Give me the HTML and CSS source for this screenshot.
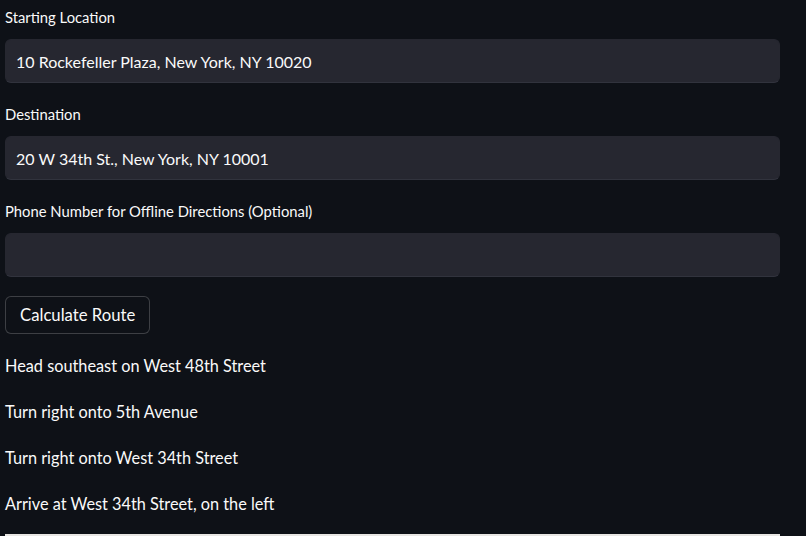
FILE: index.html
```html
<!DOCTYPE html>
<html lang="en">
<head>
    <meta charset="UTF-8">
    <meta name="viewport" content="width=device-width, initial-scale=1.0">
    <title>Route Planner</title>
    <link rel="stylesheet" href="styles.css">
</head>
<body>
    <div class="main">
        <div class="field">
            <label for="start">Starting Location</label>
            <input type="text" id="start" value="10 Rockefeller Plaza, New York, NY 10020">
        </div>

        <div class="field">
            <label for="dest">Destination</label>
            <input type="text" id="dest" value="20 W 34th St., New York, NY 10001">
        </div>

        <div class="field">
            <label for="phone">Phone Number for Offline Directions (Optional)</label>
            <input type="text" id="phone" value="">
        </div>

        <button type="button" class="btn">Calculate Route</button>

        <div class="steps">
            <p>Head southeast on West 48th Street</p>
            <p>Turn right onto 5th Avenue</p>
            <p>Turn right onto West 34th Street</p>
            <p>Arrive at West 34th Street, on the left</p>
        </div>

        <div class="map"></div>
    </div>
</body>
</html>
```

FILE: styles.css
```css
html {
    overflow: hidden;
}

body {
    margin: 0;
    padding: 0;
    background-color: #0e1117;
    color: #fafafa;
    font-family: Lato, "Noto Sans", sans-serif;
}

.main {
    width: 775px;
    padding: 7px 0 0 5px;
}

.field {
    margin-bottom: 21px;
}

.field label {
    display: block;
    font-size: 14.8px;
    line-height: 20px;
    margin-bottom: 12px;
}

.field input {
    display: block;
    box-sizing: border-box;
    width: 100%;
    height: 44px;
    padding: 0 10px;
    background-color: #262730;
    color: #fafafa;
    border: 1px solid #262730;
    border-bottom-color: #31333d;
    border-radius: 6px;
    font-family: inherit;
    font-size: 16px;
    outline: none;
}

.btn {
    display: block;
    margin-top: -2px;
    height: 38px;
    padding: 0 14px;
    background-color: #0e1117;
    color: #fafafa;
    border: 1px solid rgba(250, 250, 250, 0.2);
    border-radius: 6px;
    font-family: inherit;
    font-size: 16.7px;
}

.steps {
    margin-top: 20px;
}

.steps p {
    margin: 0 0 22px;
    font-size: 16.3px;
    line-height: 24px;
}

.map {
    margin-top: -4px;
    height: 200px;
    background-color: #e8e6e3;
}
```
